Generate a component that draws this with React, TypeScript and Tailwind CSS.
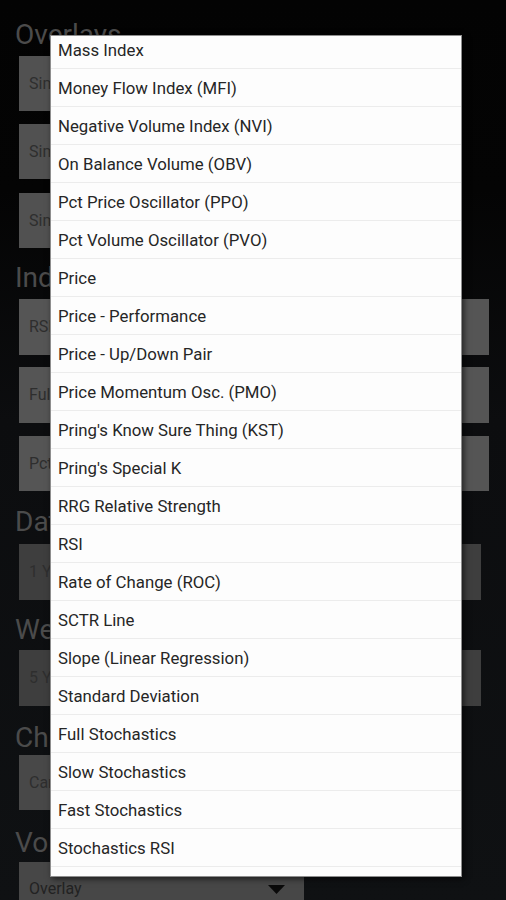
import React from "react";

const items = [
  "Mass Index",
  "Money Flow Index (MFI)",
  "Negative Volume Index (NVI)",
  "On Balance Volume (OBV)",
  "Pct Price Oscillator (PPO)",
  "Pct Volume Oscillator (PVO)",
  "Price",
  "Price - Performance",
  "Price - Up/Down Pair",
  "Price Momentum Osc. (PMO)",
  "Pring's Know Sure Thing (KST)",
  "Pring's Special K",
  "RRG Relative Strength",
  "RSI",
  "Rate of Change (ROC)",
  "SCTR Line",
  "Slope (Linear Regression)",
  "Standard Deviation",
  "Full Stochastics",
  "Slow Stochastics",
  "Fast Stochastics",
  "Stochastics RSI",
  "TRIX",
];

function Heading({ children, className }: { children: React.ReactNode; className?: string }) {
  return (
    <div className={"pl-[15px] text-[28px] leading-[28px] text-[#4b4b4b] whitespace-nowrap " + (className ?? "")}>
      {children}
    </div>
  );
}

function Box({ children, className }: { children: React.ReactNode; className?: string }) {
  return (
    <div
      className={
        "ml-[19px] flex items-center pl-[10px] text-[16px] text-[#2e2e2e] whitespace-nowrap overflow-hidden " +
        (className ?? "")
      }
    >
      {children}
    </div>
  );
}

export default function App() {
  return (
    <div
      className="relative w-[506px] h-[900px] overflow-hidden bg-[linear-gradient(#030303_0px,#040404_190px,#0c0d0f_420px,#0f1113_900px)]"
      style={{ fontFamily: "Roboto, 'Noto Sans', sans-serif" }}
    >
      {/* Background form */}
      <div className="flex flex-col">
        <Heading className="mt-[21px]">Overlays</Heading>
        <Box className="mt-[7px] h-[55px] w-[420px] bg-[#515151]">Simple Moving Avg</Box>
        <Box className="mt-[13px] h-[55px] w-[420px] bg-[#515151]">Simple Moving Avg</Box>
        <Box className="mt-[14px] h-[55px] w-[420px] bg-[#515151]">Simple Moving Avg</Box>

        <Heading className="mt-[16px]">Indicators</Heading>
        <Box className="mt-[7px] h-[56px] w-[470px] bg-[#555555]">RSI</Box>
        <Box className="mt-[12px] h-[56px] w-[470px] bg-[#555555]">Full Stochastics</Box>
        <Box className="mt-[13px] h-[55px] w-[470px] bg-[#555555]">Pct Price Oscillator</Box>

        <Heading className="mt-[17px]">Date Range</Heading>
        <Box className="mt-[8px] h-[56px] w-[462px] bg-[#3e3e3e]">1 Year</Box>

        <Heading className="mt-[16px]">Weekly Range</Heading>
        <Box className="mt-[6px] h-[56px] w-[462px] bg-[#3e3e3e]">5 Years</Box>

        <Heading className="mt-[18px]">Chart Type</Heading>
        <Box className="mt-[3px] h-[55px] w-[420px] bg-[#484848]">Candlesticks</Box>

        <Heading className="mt-[19px]">Volume</Heading>
        <div className="mt-[5px] ml-[19px] h-[38px] w-[285px] bg-[#474747] flex items-start pl-[10px] pt-[17px] text-[16px] leading-[20px] text-[#222222] relative">
          <span>Overlay</span>
          <svg
            className="absolute left-[249px] top-[23px]"
            width="17"
            height="10"
            viewBox="0 0 17 10"
          >
            <polygon points="0,0 17,0 8.5,9" fill="#0a0a0a" />
          </svg>
        </div>
      </div>

      {/* Popup menu */}
      <div className="absolute left-[50px] top-[35px] w-[412px] h-[842px] bg-[#fdfdfd] border border-[#8e8e8e] overflow-hidden shadow-[2px_2px_6px_rgba(0,0,0,0.6)]">
        <div className="-mt-[5px] flex flex-col">
          {items.map((it) => (
            <div
              key={it}
              className="h-[38px] shrink-0 border-b border-[#ececec] flex items-center pl-[7px] pt-[3px] text-[16.8px] text-[#262626] whitespace-nowrap"
            >
              {it}
            </div>
          ))}
        </div>
      </div>
    </div>
  );
}
